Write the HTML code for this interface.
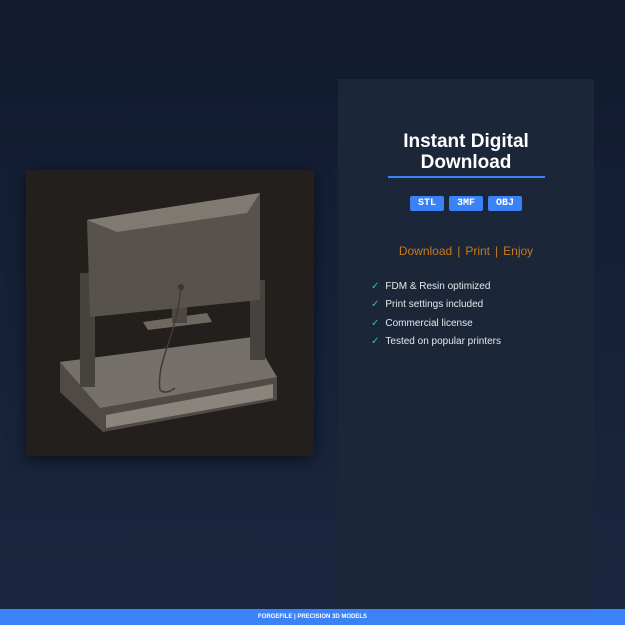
<!DOCTYPE html>
<html><head><style>
body{margin:0;width:625px;height:625px;overflow:hidden;background:linear-gradient(180deg,#111a2e 0%,#17223a 60%,#1b2740 100%);font-family:"Liberation Sans",sans-serif;position:relative}
.img{position:absolute;left:26px;top:170px;width:288px;height:286px;background:#221f1c;box-shadow:0 4px 14px rgba(0,0,0,.5)}
.panel{position:absolute;left:338px;top:79px;width:256px;height:531px;background:#1b2639}
h1{position:absolute;left:0;width:256px;top:52px;margin:0;text-align:center;color:#fff;font-size:19px;line-height:21px;font-weight:bold}
.line{position:absolute;left:50px;width:157px;height:2px;background:#3b82f6}
.tags{position:absolute;left:0;width:256px;text-align:center;font-size:0}
.tag{display:inline-block;background:#3b82f6;color:#fff;font-family:"Liberation Mono",monospace;font-weight:bold;font-size:10px;width:34px;height:15px;line-height:15px;border-radius:2px;margin:0 2.5px}
.links{position:absolute;left:0;width:256px;text-align:center;color:#c77a1e;font-size:12px}
.links span{margin:0 5px}
ul{position:absolute;left:33px;margin:0;padding:0;list-style:none;color:#e5e7eb;font-size:10px}
li{height:18.3px}
li b{color:#34c2a0;font-weight:normal;margin-right:6px}
.foot{position:absolute;left:0;bottom:0;width:625px;height:16px;background:#3b82f6;color:#fff;font-size:6px;font-weight:bold;text-align:center;line-height:16px}
</style></head><body>
<div class="img"><svg width="288" height="286" viewBox="0 0 288 286">
<path d="M34 192 L227 167 L251 207 L251 230 L77 262 L34 222 Z" fill="#4f4a45"/>
<path d="M34 192 L227 167 L251 207 L74 238 Z" fill="#75706a"/>
<path d="M80 245 L247 214 L247 228 L80 258Z" fill="#8a847c"/>
<rect x="54" y="103" width="15" height="114" fill="#46423d"/>
<rect x="224" y="110" width="15" height="80" fill="#46423d"/>
<path d="M117 152 L181 143 L186 152 L122 160Z" fill="#6e6861"/>
<rect x="146" y="137" width="15" height="16" fill="#4c4742"/>
<path d="M61 50 L234 23 L234 130 L64 147 Z" fill="#57524c"/>
<path d="M61 50 L91 62 L221 43 L234 23 Z" fill="#7f7972"/>
<path d="M155 117 C150 170 130 190 134 220 Q140 225 149 218" stroke="#3f3b37" stroke-width="1.5" fill="none"/>
<circle cx="155" cy="117" r="3" fill="#3a3632"/>
</svg></div>
<div class="panel">
<h1>Instant Digital<br>Download</h1>
<div class="line" style="top:97px"></div>
<div class="tags" style="top:117px"><span class="tag">STL</span><span class="tag">3MF</span><span class="tag">OBJ</span></div>
<div class="links" style="top:165px">Download<span>|</span>Print<span>|</span>Enjoy</div>
<ul style="top:202px"><li><b>✓</b>FDM &amp; Resin optimized</li><li><b>✓</b>Print settings included</li><li><b>✓</b>Commercial license</li><li><b>✓</b>Tested on popular printers</li></ul>
</div>
<div class="foot">FORGEFILE | PRECISION 3D MODELS</div>
</body></html>
